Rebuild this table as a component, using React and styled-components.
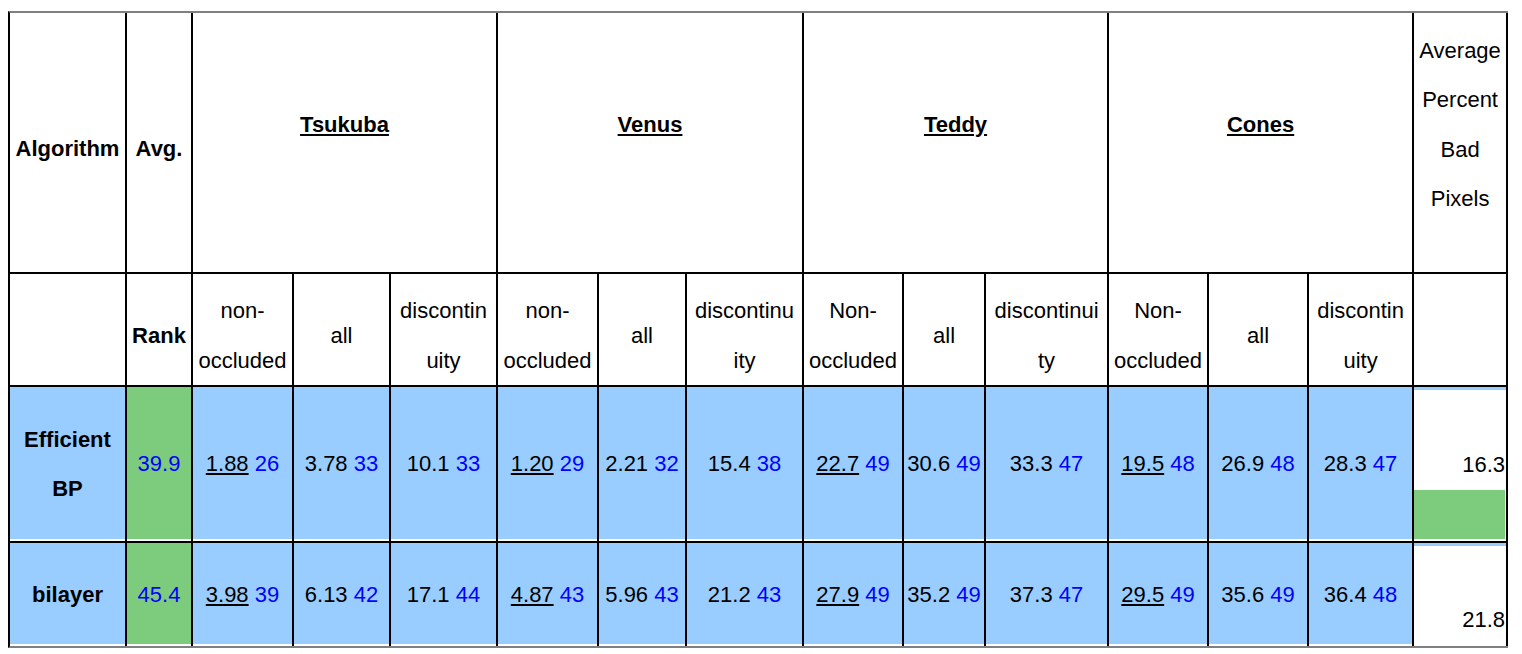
import React from "react";
import styled, { createGlobalStyle } from "styled-components";

const Global = createGlobalStyle`
  html, body { margin: 0; padding: 0; background: #fff; }
  body { font-family: "Liberation Sans", Arial, sans-serif; }
`;

const BLUE_BG = "#99ccff";
const GREEN_BG = "#7dcc7d";

const Page = styled.div`
  padding: 11px 0 0 8px;
`;

const Table = styled.table`
  border-collapse: separate;
  border-spacing: 0;
  table-layout: fixed;
  width: 1500px;
  border-top: 2px solid #808080;
  border-bottom: 2px solid #808080;
  border-left: 2px solid #000;
  font-family: "Liberation Sans", Arial, sans-serif;
  font-size: 22px;
  line-height: 49.5px;
  color: #000;
`;

const Col = styled.col`
  width: ${(p) => p.$w}px;
`;

const Row = styled.tr`
  height: ${(p) => p.$h}px;
`;

const HeadCell = styled.th`
  box-sizing: border-box;
  padding: 12px 2px ${(p) => (p.$trail ? "48px" : "0")} 2px;
  border-right: 2px solid #000;
  border-bottom: 2px solid #000;
  text-align: center;
  vertical-align: middle;
  font-weight: ${(p) => (p.$bold ? 700 : 400)};
  white-space: nowrap;
  background: #fff;
`;

const Dataset = styled.span`
  font-weight: 700;
  text-decoration: underline;
`;

const DataCell = styled.td`
  box-sizing: border-box;
  padding: 0 2px;
  border-right: 2px solid #000;
  border-bottom: ${(p) => (p.$last ? "0" : "2px solid #000")};
  text-align: center;
  vertical-align: middle;
  white-space: nowrap;
  background: ${(p) => (p.$green ? GREEN_BG : BLUE_BG)};
  box-shadow: inset 0 -2px 0 #fff;
  font-weight: ${(p) => (p.$bold ? 700 : 400)};
  color: ${(p) => (p.$blue ? "#0000ff" : "#000")};
`;

const ScoreCell = styled.td`
  box-sizing: border-box;
  padding: 0 1px 2px 0;
  border-right: 2px solid #000;
  border-bottom: ${(p) => (p.$last ? "0" : "2px solid #000")};
  text-align: right;
  vertical-align: bottom;
  background: #fff;
  box-shadow: inset 0 3px 0 ${BLUE_BG};
`;

const ScoreBar = styled.div`
  height: 49.5px;
  margin-right: -1px;
  background: ${GREEN_BG};
`;

const Value = styled.span`
  text-decoration: ${(p) => (p.$u ? "underline" : "none")};
`;

const Rank = styled.span`
  color: #0000ff;
`;

const widths = [117, 66, 101, 97, 107, 101, 88, 117, 100, 82, 123, 100, 100, 105, 94];

const datasets = ["Tsukuba", "Venus", "Teddy", "Cones"];

const subHeads = [
  ["non-", "occluded"], ["all"], ["discontin", "uity"],
  ["non-", "occluded"], ["all"], ["discontinu", "ity"],
  ["Non-", "occluded"], ["all"], ["discontinui", "ty"],
  ["Non-", "occluded"], ["all"], ["discontin", "uity"],
];

const rows = [
  {
    name: ["Efficient", "BP"],
    avg: "39.9",
    cells: [
      ["1.88", "26"], ["3.78", "33"], ["10.1", "33"],
      ["1.20", "29"], ["2.21", "32"], ["15.4", "38"],
      ["22.7", "49"], ["30.6", "49"], ["33.3", "47"],
      ["19.5", "48"], ["26.9", "48"], ["28.3", "47"],
    ],
    score: "16.3",
    bar: 100,
    h: 156,
  },
  {
    name: ["bilayer"],
    avg: "45.4",
    cells: [
      ["3.98", "39"], ["6.13", "42"], ["17.1", "44"],
      ["4.87", "43"], ["5.96", "43"], ["21.2", "43"],
      ["27.9", "49"], ["35.2", "49"], ["37.3", "47"],
      ["29.5", "49"], ["35.6", "49"], ["36.4", "48"],
    ],
    score: "21.8",
    bar: 0,
    h: 103,
  },
];

const Lines = ({ lines }) =>
  lines.map((l, i) => (
    <React.Fragment key={i}>
      {i > 0 && <br />}
      {l}
    </React.Fragment>
  ));

export default function App() {
  return (
    <Page>
      <Global />
      <Table>
        <colgroup>
          {widths.map((w, i) => (
            <Col key={i} $w={w} />
          ))}
        </colgroup>
        <tbody>
          <Row $h={261}>
            <HeadCell $bold>Algorithm</HeadCell>
            <HeadCell $bold>Avg.</HeadCell>
            {datasets.map((d) => (
              <HeadCell key={d} colSpan={3} $trail>
                <Dataset>{d}</Dataset>
              </HeadCell>
            ))}
            <HeadCell $trail>
              <Lines lines={["Average", "Percent", "Bad", "Pixels"]} />
            </HeadCell>
          </Row>
          <Row $h={112}>
            <HeadCell />
            <HeadCell $bold>Rank</HeadCell>
            {subHeads.map((s, i) => (
              <HeadCell key={i}>
                <Lines lines={s} />
              </HeadCell>
            ))}
            <HeadCell />
          </Row>
          {rows.map((r, ri) => {
            const last = ri === rows.length - 1;
            return (
              <Row key={ri} $h={r.h}>
                <DataCell $bold $last={last}>
                  <Lines lines={r.name} />
                </DataCell>
                <DataCell $green $blue $last={last}>
                  {r.avg}
                </DataCell>
                {r.cells.map(([v, rk], ci) => (
                  <DataCell key={ci} $last={last}>
                    <Value $u={ci % 3 === 0}>{v}</Value> <Rank>{rk}</Rank>
                  </DataCell>
                ))}
                <ScoreCell $last={last}>
                  {r.score}
                  {r.bar > 0 && <ScoreBar style={{ width: `${r.bar}%` }} />}
                </ScoreCell>
              </Row>
            );
          })}
        </tbody>
      </Table>
    </Page>
  );
}
